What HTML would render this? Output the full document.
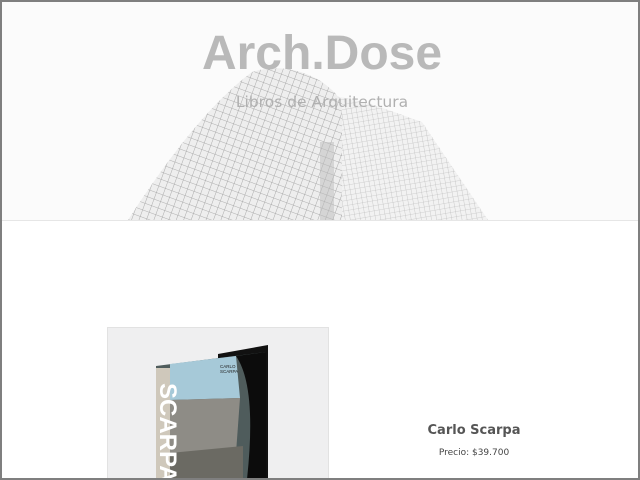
<!DOCTYPE html>
<html><head><meta charset="utf-8"><style>
html,body{margin:0;padding:0;background:#fff;}
body{width:640px;height:480px;position:relative;overflow:hidden;font-family:"DejaVu Sans","Liberation Sans",sans-serif;}
.frame{position:absolute;left:0;top:0;width:636px;height:476px;border:2px solid #7f7f7f;overflow:hidden;}
.hero{position:absolute;left:0;top:0;width:636px;height:218px;background:#fbfbfb;border-bottom:1px solid #e6e6e6;overflow:hidden;}
h1{position:absolute;left:0;width:640px;top:24px;margin:0;text-align:center;font-family:"Liberation Sans",sans-serif;font-size:48px;font-weight:bold;color:#b9b9b9;}
.sub{position:absolute;left:0;width:640px;top:91px;text-align:center;font-size:15.5px;color:#b0b0b0;}
.card{position:absolute;left:105px;top:325px;width:220px;height:160px;background:#efeff0;border:1px solid #e2e2e2;}
.title{position:absolute;left:372px;width:200px;top:421px;text-align:center;font-size:13px;font-weight:bold;color:#555;}
.price{position:absolute;left:372px;width:200px;top:446px;text-align:center;font-size:9px;color:#444;}
</style></head><body>
<div class="frame">
<div class="hero">
<svg width="636" height="218" style="position:absolute;left:0;top:0">
<defs>
<pattern id="g" width="7" height="7" patternUnits="userSpaceOnUse" patternTransform="rotate(20)">
<path d="M0 0H7M0 0V7" stroke="#9a9a9a" stroke-width="0.8" fill="none"/>
</pattern>
<pattern id="g2" width="5" height="5" patternUnits="userSpaceOnUse" patternTransform="rotate(-10)">
<path d="M0 0H5M0 0V5" stroke="#b0b0b0" stroke-width="0.6" fill="none"/>
</pattern>
</defs>
<path d="M300 90 C360 95 390 110 420 120 L486 218 L300 218 Z" fill="#f2f2f2"/>
<path d="M300 90 C360 95 390 110 420 120 L486 218 L300 218 Z" fill="url(#g2)"/>
<path d="M126 218 C170 150 210 100 250 70 C280 60 320 70 340 100 L340 218 Z" fill="#eeeeee"/>
<path d="M126 218 C170 150 210 100 250 70 C280 60 320 70 340 100 L340 218 Z" fill="url(#g)"/>
<rect x="318" y="140" width="14" height="78" fill="#bbb" opacity="0.5"/>
</svg>
<h1>Arch.Dose</h1>
<div class="sub">Libros de Arquitectura</div>
</div>
<div class="card">
<svg width="220" height="160" style="position:absolute;left:0;top:0">
<polygon points="110,26 160,17 160,160 110,160" fill="#111"/>
<polygon points="48,38 158,24 158,160 48,160" fill="#4f5c5c"/>
<polygon points="62,36 128,28 132,70 62,72" fill="#a6c9d8"/>
<polygon points="62,72 132,70 128,125 62,130" fill="#8e8c86"/>
<polygon points="62,125 135,118 135,160 62,160" fill="#6b6a63"/>
<path d="M128 28 Q150 60 138 160 L158 160 L158 24 Z" fill="#0c0c0c"/>
<rect x="48" y="40" width="14" height="120" fill="#cfc8bb"/>
<text x="52" y="55" transform="rotate(90 52 55)" font-size="24" font-weight="bold" fill="#fff" font-family="Liberation Sans">SCARPA</text>
<text x="112" y="40" font-size="4.5" fill="#222" font-family="Liberation Sans">CARLO</text>
<text x="112" y="45" font-size="4.5" fill="#222" font-family="Liberation Sans">SCARPA</text>
</svg>
</div>
<div class="title">Carlo Scarpa</div>
<div class="price">Precio: $39.700</div>
</div>
</body></html>
